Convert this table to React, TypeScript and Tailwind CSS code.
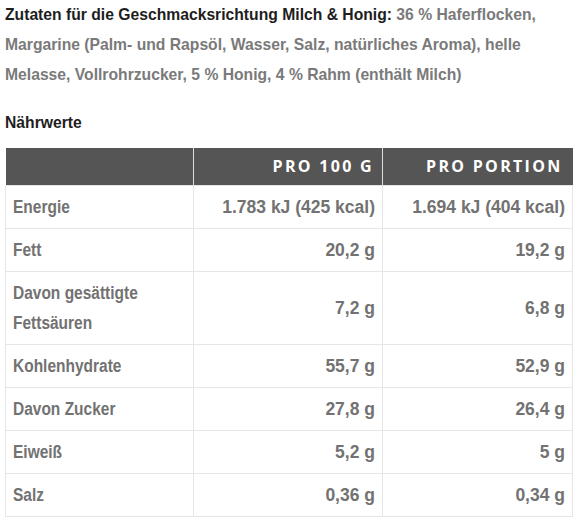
import React from "react";

const rows: [string, string, string][] = [
  ["Energie", "1.783 kJ (425 kcal)", "1.694 kJ (404 kcal)"],
  ["Fett", "20,2 g", "19,2 g"],
  ["Davon gesättigte Fettsäuren", "7,2 g", "6,8 g"],
  ["Kohlenhydrate", "55,7 g", "52,9 g"],
  ["Davon Zucker", "27,8 g", "26,4 g"],
  ["Eiweiß", "5,2 g", "5 g"],
  ["Salz", "0,36 g", "0,34 g"],
];

const cell = "border border-[#e6e6e6] px-[7px] py-[6px] text-[17.5px] leading-[30px] font-bold text-[#727272] whitespace-nowrap";

export default function App() {
  return (
    <div className="w-[579px] h-[524px] bg-white px-[5px] overflow-hidden" style={{ fontFamily: '"Liberation Sans", Arial, sans-serif' }}>
      <p className="text-[15.7px] leading-[30px] font-bold text-[#7a7a7a] whitespace-nowrap">
        <span className="text-[#1e1e1e]">Zutaten für die Geschmacksrichtung Milch &amp; Honig:</span> 36 % Haferflocken,
        <br />
        Margarine (Palm- und Rapsöl, Wasser, Salz, natürliches Aroma), helle
        <br />
        Melasse, Vollrohrzucker, 5 % Honig, 4 % Rahm (enthält Milch)
      </p>
      <h3 className="mt-[18px] text-[15.7px] leading-[30px] font-bold text-[#1e1e1e]">Nährwerte</h3>
      <table className="mt-[10px] w-[567px] border-collapse table-fixed">
        <colgroup>
          <col className="w-[188px]" />
          <col className="w-[189px]" />
          <col className="w-[190px]" />
        </colgroup>
        <thead>
          <tr className="bg-[#555] h-[37px]">
            <th className="border-r border-[#ddd] p-0"></th>
            <th className="border-r border-[#ddd] pl-[9px] pr-[8px] text-right text-white text-[16px] font-bold tracking-[2.3px]" style={{ fontFamily: '"Open Sans", sans-serif' }}>PRO 100 G</th>
            <th className="pl-[9px] pr-[10px] text-right text-white text-[16px] font-bold tracking-[2.3px]" style={{ fontFamily: '"Open Sans", sans-serif' }}>PRO PORTION</th>
          </tr>
        </thead>
        <tbody>
          {rows.map((r) => (
            <tr key={r[0]}>
              <td className={cell + " text-left"}>
                <span className="inline-block origin-left scale-x-[0.885]">
                  {r[0] === "Davon gesättigte Fettsäuren" ? <>Davon gesättigte<br />Fettsäuren</> : r[0]}
                </span>
              </td>
              <td className={cell + " text-right"}>{r[1]}</td>
              <td className={cell + " text-right"}>{r[2]}</td>
            </tr>
          ))}
        </tbody>
      </table>
    </div>
  );
}
